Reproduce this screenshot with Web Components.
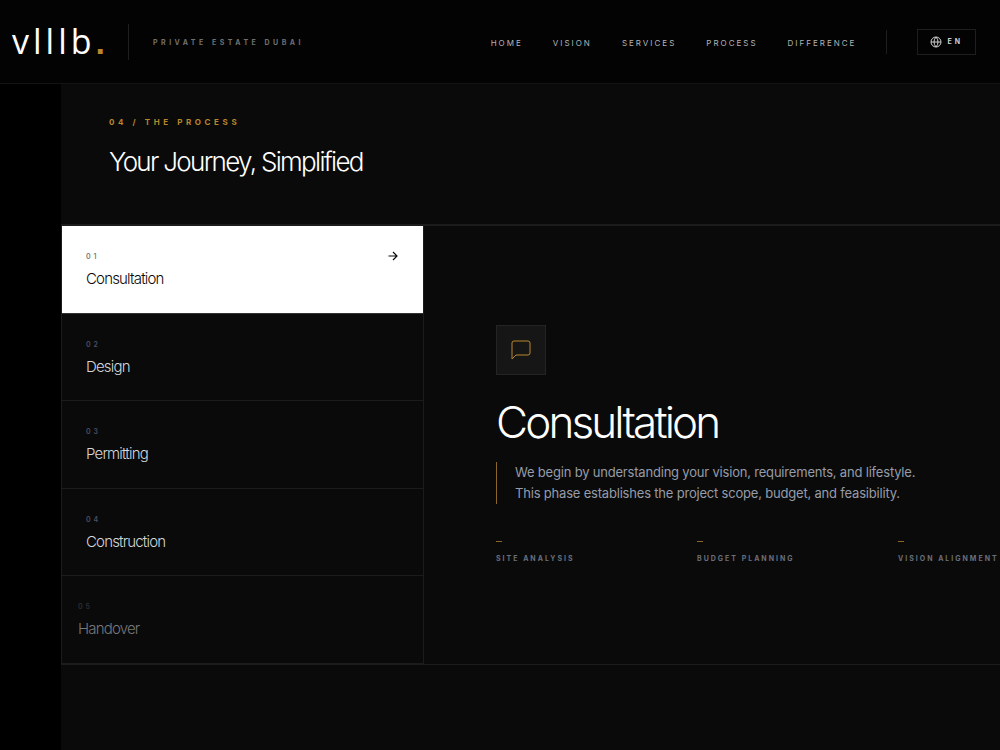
<!DOCTYPE html>
<html lang="en">
<head>
<meta charset="utf-8">
<meta name="viewport" content="width=device-width, initial-scale=1">
<title>vlllb. Private Estate Dubai</title>
<style>
  html { background: #000; }
  body { margin: 0; min-height: 100vh; overflow-x: hidden; display: flex; flex-direction: column; font-family: Inter, "Liberation Sans", sans-serif; color: #fff; }
</style>
</head>
<body>
<site-header></site-header>
<process-section></process-section>

<script>
class BaseElement extends HTMLElement {
  constructor() {
    super();
    this.attachShadow({ mode: 'open' }).innerHTML =
      '<style>*{box-sizing:border-box}h2,h3,p,ul,ol{margin:0;padding:0;list-style:none}</style>' + this.view();
  }
}

customElements.define('brand-logo', class extends BaseElement {
  view() { return `
    <style>
      :host { display: block; }
      a { display: block; color: #fff; text-decoration: none; font-size: 34px; line-height: 48px; font-weight: 400; letter-spacing: 4px; font-family: "Open Sans", sans-serif; }
      span { color: #b8862b; font-family: "Liberation Sans", sans-serif; font-weight: 700; }
    </style>
    <a href="#home">vlllb<span>.</span></a>`; }
});

customElements.define('nav-link', class extends BaseElement {
  view() { return `
    <style>
      :host { display: block; }
      a { color: #b4b4b4; text-decoration: none; font-size: 8px; line-height: 12px; letter-spacing: 2px; display: block; }
    </style>
    <a href="#"><slot></slot></a>`; }
});

customElements.define('language-button', class extends BaseElement {
  view() { return `
    <style>
      :host { display: block; }
      button { display: flex; align-items: center; gap: 5px; height: 26px; padding: 0 12px; background: transparent; border: 1px solid #1e1e1e; color: #d0d0d0; font: 700 7px/12px Inter, sans-serif; letter-spacing: 3px; }
      svg { display: block; }
    </style>
    <button type="button">
      <svg width="12" height="12" viewBox="0 0 24 24" fill="none" stroke="currentColor" stroke-width="2" aria-hidden="true"><circle cx="12" cy="12" r="10"/><path d="M12 2a14.5 14.5 0 0 0 0 20 14.5 14.5 0 0 0 0-20M2 12h20"/></svg>
      <span><slot></slot></span>
    </button>`; }
});

customElements.define('site-header', class extends BaseElement {
  view() { return `
    <style>
      :host { display: block; background: #030303; border-bottom: 1px solid #141414; }
      header { display: flex; align-items: center; min-height: 83px; padding: 0 24px 0 12px; }
      .rule { width: 1px; background: #1e1e1e; }
      .tall { height: 36px; margin: 0 24px 0 auto; }
      .short { height: 24px; margin: 0 30px; }
      .brand { display: flex; align-items: center; min-width: 141px; }
      .tag { margin-top: 3px; font-size: 7px; line-height: 12px; font-weight: 700; letter-spacing: 0.5em; color: #707070; white-space: nowrap; }
      nav { display: flex; gap: 30px; margin: 3px 0 0 auto; }
    </style>
    <header>
      <div class="brand"><brand-logo></brand-logo><div class="rule tall"></div></div>
      <p class="tag">PRIVATE ESTATE DUBAI</p>
      <nav aria-label="Main">
        <nav-link>HOME</nav-link><nav-link>VISION</nav-link><nav-link>SERVICES</nav-link><nav-link>PROCESS</nav-link><nav-link>DIFFERENCE</nav-link>
      </nav>
      <div class="rule short"></div>
      <language-button>EN</language-button>
    </header>`; }
});

customElements.define('process-step', class extends BaseElement {
  view() { return `
    <style>
      :host { display: grid; border-bottom: 1px solid #1c1c1c; color: #d4d6da; --num: #4b5060; }
      :host([active]) { background: #fff; color: #0a0a0a; --num: #777; border-color: #333; }
      :host([entering]) { color: #77787a; --num: #2c2f37; }
      button { display: grid; grid-template-columns: 1fr auto; align-content: start; width: 100%; padding: 24px 24px 16px; background: none; border: 0; color: inherit; text-align: left; font-family: inherit; }
      :host([entering]) button { padding-left: 16px; }
      .num { font-size: 7px; line-height: 14px; font-weight: 600; letter-spacing: 3px; color: var(--num); }
      .name { font-size: 15px; line-height: 24px; margin-top: 3px; font-weight: 300; letter-spacing: -0.055em; grid-column: 1; }
      svg { display: none; }
      :host([active]) svg { display: block; }
    </style>
    <button type="button">
      <span class="num"><slot name="num"></slot></span>
      <svg width="12" height="12" viewBox="0 0 24 24" fill="none" stroke="currentColor" stroke-width="2.4" aria-hidden="true"><path d="M3 12h17M12 4l8 8-8 8"/></svg>
      <span class="name"><slot></slot></span>
    </button>`; }
});

customElements.define('feature-item', class extends BaseElement {
  view() { return `
    <style>
      :host { display: block; }
      i { display: block; width: 6px; height: 1px; background: #8c6828; margin-bottom: 11px; }
      p { font-size: 7px; line-height: 12px; font-weight: 700; letter-spacing: 2px; color: #6b6f7a; white-space: nowrap; }
    </style>
    <i></i><p><slot></slot></p>`; }
});

customElements.define('step-detail', class extends BaseElement {
  view() { return `
    <style>
      :host { display: flex; flex-direction: column; justify-content: center; min-height: 438px; padding-left: 72px; }
      .icon { display: grid; place-items: center; width: 50px; height: 50px; background: #161616; border: 1px solid #242424; color: #b8862b; }
      h3 { margin-top: 23px; font-size: 44px; line-height: 48px; font-weight: 300; letter-spacing: -0.065em; }
      .copy { margin-top: 16px; padding-left: 18px; border-left: 1px solid #8c6828; font-size: 13px; line-height: 21px; font-weight: 400; letter-spacing: -0.015em; color: #969ca8; }
      .features { display: grid; grid-template-columns: 1fr 1fr 102px; margin-top: 37px; }
    </style>
    <div class="icon"><svg width="24" height="24" viewBox="0 0 24 24" fill="none" stroke="currentColor" stroke-width="1" aria-hidden="true"><path d="M21 15a2 2 0 0 1-2 2H7l-4 4V5a2 2 0 0 1 2-2h14a2 2 0 0 1 2 2z"/></svg></div>
    <h3>Consultation</h3>
    <p class="copy">We begin by understanding your vision, requirements, and lifestyle.<br>This phase establishes the project scope, budget, and feasibility.</p>
    <div class="features">
      <feature-item>SITE ANALYSIS</feature-item><feature-item>BUDGET PLANNING</feature-item><feature-item>VISION ALIGNMENT</feature-item>
    </div>`; }
});

customElements.define('process-section', class extends BaseElement {
  view() { return `
    <style>
      :host { display: block; flex: 1; margin-left: 61px; background: #0a0a0a; }
      .head { padding: 32px 48px 46px; }
      .eyebrow { font-size: 8px; line-height: 12px; font-weight: 700; letter-spacing: 0.45em; color: #b8862b; }
      h2 { margin-top: 18px; font-size: 26px; line-height: 32px; font-weight: 300; letter-spacing: -0.065em; }
      .body { display: grid; grid-template-columns: 363px 1fr; border: solid #1c1c1c; border-width: 2px 0 1px 0; }
      .list { display: grid; grid-auto-rows: 1fr; border: solid #1c1c1c; border-width: 0 1px; }
    </style>
    <section>
      <div class="head">
        <p class="eyebrow">04 / THE PROCESS</p>
        <h2>Your Journey, Simplified</h2>
      </div>
      <div class="body">
        <div class="list">
          <process-step active><span slot="num">01</span>Consultation</process-step>
          <process-step><span slot="num">02</span>Design</process-step>
          <process-step><span slot="num">03</span>Permitting</process-step>
          <process-step><span slot="num">04</span>Construction</process-step>
          <process-step entering><span slot="num">05</span>Handover</process-step>
        </div>
        <step-detail></step-detail>
      </div>
    </section>`; }
});
</script>
</body>
</html>
